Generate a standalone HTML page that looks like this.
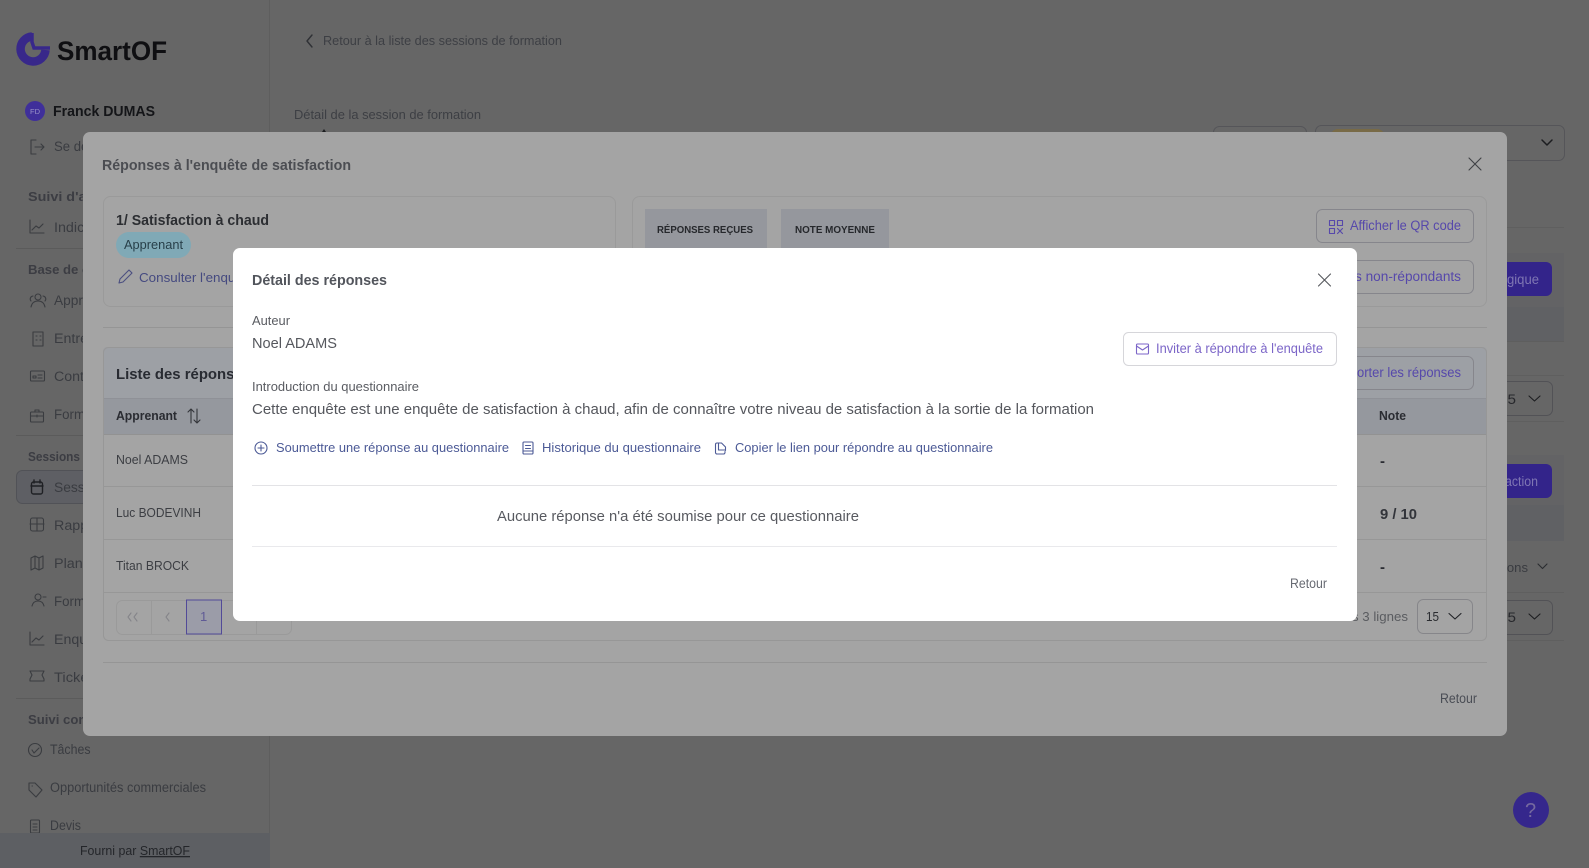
<!DOCTYPE html>
<html lang="fr"><head><meta charset="utf-8"><title>SmartOF</title>
<style>
html,body{margin:0;padding:0;width:1589px;height:868px;overflow:hidden;background:#666}
svg{display:block;font-family:"Liberation Sans",sans-serif}
.i{fill:none;stroke-width:1.1;stroke-linecap:round;stroke-linejoin:round}
.b{font-weight:700}
</style></head><body>
<svg width="1589" height="868" viewBox="0 0 1589 868" xmlns="http://www.w3.org/2000/svg">
<rect width="1589" height="868" fill="#666"/>
<!-- sidebar -->
<rect x="269" y="0" width="1" height="833" fill="#5e5e5e"/>
<path d="M32 36.500A12.500 12.500 0 1 0 45.500 50" fill="none" stroke="#38288a" stroke-width="8.500"/>
<path d="M32 33v9l2 6h16" fill="none" stroke="#38288a" stroke-width="3.500"/>
<text x="57" y="60" font-size="27" class="b" fill="#0f0f12" textLength="110" lengthAdjust="spacingAndGlyphs">SmartOF</text>
<circle cx="35" cy="111" r="10" fill="#3f2f9a"/>
<text x="30" y="114" font-size="7.500" fill="#9a93c8" textLength="10" lengthAdjust="spacingAndGlyphs">FD</text>
<text x="53" y="116" font-size="15" class="b" fill="#141518" textLength="102" lengthAdjust="spacingAndGlyphs">Franck DUMAS</text>
<rect x="16.500" y="470.500" width="253" height="33" rx="6" fill="#5e5f64" stroke="#515257"/>
<g font-size="13.500" fill="#3a3c41">
<text x="54" y="151" textLength="92" lengthAdjust="spacingAndGlyphs">Se déconnecter</text>
<text x="54" y="232" textLength="70" lengthAdjust="spacingAndGlyphs">Indicateurs</text>
<text x="54" y="305" textLength="70" lengthAdjust="spacingAndGlyphs">Apprenants</text>
<text x="54" y="343" textLength="72" lengthAdjust="spacingAndGlyphs">Entreprises</text>
<text x="54" y="381" textLength="56" lengthAdjust="spacingAndGlyphs">Contacts</text>
<text x="54" y="419" textLength="68" lengthAdjust="spacingAndGlyphs">Formateurs</text>
<text x="54" y="492" textLength="56" lengthAdjust="spacingAndGlyphs">Sessions</text>
<text x="54" y="530" textLength="58" lengthAdjust="spacingAndGlyphs">Rapports</text>
<text x="54" y="568" textLength="56" lengthAdjust="spacingAndGlyphs">Planning</text>
<text x="54" y="606" textLength="68" lengthAdjust="spacingAndGlyphs">Formateurs</text>
<text x="54" y="644" textLength="60" lengthAdjust="spacingAndGlyphs">Enquêtes</text>
<text x="54" y="682" textLength="46" lengthAdjust="spacingAndGlyphs">Tickets</text>
<text x="50" y="754" textLength="40.500" lengthAdjust="spacingAndGlyphs">Tâches</text>
<text x="50" y="792" textLength="156" lengthAdjust="spacingAndGlyphs">Opportunités commerciales</text>
<text x="50" y="830" textLength="31" lengthAdjust="spacingAndGlyphs">Devis</text>
</g>
<g font-size="13" class="b" fill="#3c3d43">
<text x="28" y="201" textLength="100" lengthAdjust="spacingAndGlyphs">Suivi d'activité</text>
<text x="28" y="274" textLength="108" lengthAdjust="spacingAndGlyphs">Base de contacts</text>
<text x="28" y="461" textLength="52" lengthAdjust="spacingAndGlyphs">Sessions</text>
<text x="28" y="724" textLength="108" lengthAdjust="spacingAndGlyphs">Suivi commercial</text>
</g>
<g fill="#5b5b5b"><rect x="16" y="248" width="253" height="1"/><rect x="16" y="435" width="253" height="1"/><rect x="16" y="698" width="253" height="1"/></g>
<g class="i" stroke="#3a3c40">
<path d="M36 140h-5v14h5M35 147h9M41 144l3 3-3 3"/>
<path d="M30 220v13h14M32 230l4-4 3 2 4-4"/>
<circle cx="38" cy="297" r="3"/><path d="M31 307c1-5 4-6 7-6s6 1 7 6M33 296a3 3 0 0 0-2 5M43 296a3 3 0 0 1 2 5"/>
<path d="M33 332h10v14H33zM36 336h1M40 336h1M36 340h1M40 340h1"/>
<rect x="30.500" y="371" width="14" height="10" rx="1"/><path d="M33 376h3v2h-3zM38 375h4M38 378h4"/>
<rect x="30.500" y="412" width="13" height="10" rx="1"/><path d="M35 412v-2h4v2M31 416h12M37 415v2"/>
<rect x="31.500" y="482" width="11" height="12" rx="2" stroke="#1f2024" stroke-width="1.400"/><path d="M31 486h12M34 480v3M40 480v3" stroke="#1f2024" stroke-width="1.400"/>
<rect x="30.500" y="518" width="13" height="13" rx="2"/><path d="M30 524h14M37 518v13"/>
<path d="M31 558l4-2 4 2 4-2v12l-4 2-4-2-4 2zM35 556v12M39 558v12"/>
<circle cx="38" cy="597" r="3"/><path d="M32 606c1-4 3-5 6-5s5 1 6 5M43 597h3"/>
<path d="M30 632v13h14M32 642l4-4 3 2 4-4"/>
<path d="M30 671h14l-2 4 2 4v2H30v-2l2-4-2-4z"/>
<circle cx="35" cy="750" r="6.500"/><path d="M32 750l2 3 5-5"/>
<path d="M29 783h6l7 7-6 7-7-7zM32 786h.5"/>
<rect x="30.500" y="820" width="9" height="13" rx="1"/><path d="M33 824h4M33 827h4M33 830h4"/>
<path d="M312 35l-5 6 5 6" stroke="#2f3135" stroke-width="1.400"/>
<path d="M1542 140l5 5 5-5" stroke="#1c1d20" stroke-width="1.500"/>
</g>
<rect x="0" y="833" width="270" height="35" fill="#5d5f63"/>
<text x="80" y="855" font-size="13" fill="#24262a" textLength="110" lengthAdjust="spacingAndGlyphs">Fourni par <tspan text-decoration="underline">SmartOF</tspan></text>
<!-- main -->
<text x="323" y="45" font-size="13" fill="#3d3f44" textLength="239" lengthAdjust="spacingAndGlyphs">Retour à la liste des sessions de formation</text>
<text x="294" y="119" font-size="13" fill="#3d3f44" textLength="187" lengthAdjust="spacingAndGlyphs">Détail de la session de formation</text>
<path d="M322 132l2-3 2 3" fill="#1c1d20"/>
<rect x="1213.500" y="126.500" width="93" height="40" rx="6" fill="none" stroke="#555559"/>
<rect x="1315.500" y="125.500" width="249" height="35" rx="6" fill="none" stroke="#555559"/>
<rect x="1330" y="129" width="55" height="20" rx="8" fill="#786a46"/>
<rect x="1240" y="227" width="324" height="1" fill="#5f5f5f"/>
<!-- right side remains -->
<rect x="1500" y="253" width="64" height="54" fill="#636365"/>
<rect x="1500" y="307" width="64" height="34" fill="#606164"/>
<rect x="1500" y="341" width="64" height="1" fill="#5e5e5e"/>
<rect x="1500" y="375" width="64" height="1" fill="#5f5f5f"/>
<rect x="1500" y="421" width="64" height="1" fill="#5f5f5f"/>
<rect x="1440" y="262" width="112" height="34" rx="6" fill="#33248a"/>
<text x="1507" y="284" font-size="13.500" fill="#7f76b3" textLength="32" lengthAdjust="spacingAndGlyphs">gique</text>
<rect x="1400.500" y="381.500" width="152" height="34" rx="6" fill="none" stroke="#525256"/>
<text x="1499" y="404" font-size="13.500" fill="#27282c" textLength="17" lengthAdjust="spacingAndGlyphs">15</text>
<path d="M1529 396l5.500 5 5.500-5" class="i" stroke="#1c1d20" stroke-width="1.500"/>
<rect x="1500" y="455" width="64" height="50" fill="#636365"/>
<rect x="1500" y="505" width="64" height="36" fill="#606164"/>
<rect x="1400" y="464" width="152" height="34" rx="6" fill="#33248a"/>
<text x="1505" y="486" font-size="13.500" fill="#7f76b3" textLength="33" lengthAdjust="spacingAndGlyphs">action</text>
<text x="1504" y="572" font-size="13" fill="#3a3c41" textLength="24" lengthAdjust="spacingAndGlyphs">ions</text>
<path d="M1538 564l4.500 4.500 4.500-4.500" class="i" stroke="#2a2c30" stroke-width="1.400"/>
<rect x="1500" y="592" width="64" height="1" fill="#5f5f5f"/>
<rect x="1400.500" y="600.500" width="152" height="34" rx="6" fill="none" stroke="#525256"/>
<text x="1499" y="622" font-size="13.500" fill="#27282c" textLength="17" lengthAdjust="spacingAndGlyphs">15</text>
<path d="M1529 614l5.500 5 5.500-5" class="i" stroke="#1c1d20" stroke-width="1.500"/>
<rect x="1500" y="640" width="64" height="1" fill="#5f5f5f"/>
<circle cx="1531" cy="810" r="18" fill="#35278c"/>
<text x="1525" y="817" font-size="20" fill="#75699f">?</text>
<!-- outer modal -->
<rect x="83" y="132" width="1424" height="604" rx="7" fill="#a4a4a4"/>
<text x="102" y="170" font-size="15" class="b" fill="#4b4d52" textLength="249" lengthAdjust="spacingAndGlyphs">Réponses à l'enquête de satisfaction</text>
<path d="M1469 158l12 12M1481 158l-12 12" class="i" stroke="#3f4145" stroke-width="1.200"/>
<rect x="103.500" y="196.500" width="512" height="110" rx="7" fill="none" stroke="#9a9a9a"/>
<rect x="632.500" y="196.500" width="854" height="110" rx="7" fill="none" stroke="#9a9a9a"/>
<text x="116" y="225" font-size="15" class="b" fill="#2c2e32" textLength="153" lengthAdjust="spacingAndGlyphs">1/ Satisfaction à chaud</text>
<rect x="116" y="232" width="75" height="26" rx="13" fill="#80a9b6"/>
<text x="124" y="249" font-size="13" fill="#28404a" textLength="59" lengthAdjust="spacingAndGlyphs">Apprenant</text>
<path d="M119 283l1-4 9-9 3 3-9 9z" class="i" stroke="#4b4f80"/>
<text x="139" y="282" font-size="13" fill="#454a80" textLength="115" lengthAdjust="spacingAndGlyphs">Consulter l'enquête</text>
<rect x="645" y="209" width="122" height="90" fill="#95979d"/>
<rect x="781" y="209" width="108" height="90" fill="#95979d"/>
<text x="657" y="233" font-size="10.500" class="b" fill="#26282c" textLength="96" lengthAdjust="spacingAndGlyphs">RÉPONSES REÇUES</text>
<text x="795" y="233" font-size="10.500" class="b" fill="#26282c" textLength="80" lengthAdjust="spacingAndGlyphs">NOTE MOYENNE</text>
<rect x="1316.500" y="209.500" width="157" height="33" rx="6" fill="none" stroke="#86868c"/>
<g class="i" stroke="#5648ab"><rect x="1329.500" y="220.500" width="5" height="5"/><rect x="1337.500" y="220.500" width="5" height="5"/><rect x="1329.500" y="228.500" width="5" height="5"/><path d="M1337.500 228.500l5 5M1342.500 228.500l-5 5"/></g>
<text x="1350" y="230" font-size="13.500" fill="#5648ab" textLength="111" lengthAdjust="spacingAndGlyphs">Afficher le QR code</text>
<rect x="1316.500" y="260.500" width="157" height="33" rx="6" fill="none" stroke="#86868c"/>
<text x="1355" y="281" font-size="13.500" fill="#5648ab" textLength="106" lengthAdjust="spacingAndGlyphs">s non-répondants</text>
<rect x="103" y="327" width="1384" height="1" fill="#959595"/>
<rect x="103" y="347" width="1384" height="52" rx="4" fill="#9da0a5"/>
<rect x="103" y="398" width="1384" height="36" fill="#95989e"/>
<rect x="103" y="398" width="1384" height="1" fill="#8f9197"/>
<rect x="103" y="434" width="1384" height="1" fill="#929292"/>
<rect x="103.500" y="347.500" width="1383" height="293" rx="5" fill="none" stroke="#979797"/>
<rect x="103" y="486" width="1384" height="1" fill="#979797"/>
<rect x="103" y="539" width="1384" height="1" fill="#979797"/>
<rect x="103" y="592" width="1384" height="1" fill="#979797"/>
<text x="116" y="379" font-size="15" class="b" fill="#282b32" textLength="135" lengthAdjust="spacingAndGlyphs">Liste des réponses</text>
<rect x="1316.500" y="356.500" width="157" height="33" rx="6" fill="none" stroke="#86868c"/>
<text x="1357" y="377" font-size="13.500" fill="#5648ab" textLength="104" lengthAdjust="spacingAndGlyphs">orter les réponses</text>
<text x="116" y="420" font-size="13" class="b" fill="#2a2c32" textLength="61" lengthAdjust="spacingAndGlyphs">Apprenant</text>
<path d="M191 423v-14M188 412l3-3 3 3M197 409v14M194 420l3 3 3-3" class="i" stroke="#33353a"/>
<text x="1379" y="420" font-size="13" class="b" fill="#2a2c32" textLength="27" lengthAdjust="spacingAndGlyphs">Note</text>
<g font-size="13" fill="#3c3e43">
<text x="116" y="464" textLength="72" lengthAdjust="spacingAndGlyphs">Noel ADAMS</text>
<text x="116" y="517" textLength="85" lengthAdjust="spacingAndGlyphs">Luc BODEVINH</text>
<text x="116" y="570" textLength="73" lengthAdjust="spacingAndGlyphs">Titan BROCK</text>
</g>
<text x="1380" y="466" font-size="15" class="b" fill="#2a2c32">-</text>
<text x="1380" y="519" font-size="15" class="b" fill="#32343a" textLength="37" lengthAdjust="spacingAndGlyphs">9 / 10</text>
<text x="1380" y="572" font-size="15" class="b" fill="#2a2c32">-</text>
<rect x="116.500" y="600.500" width="175" height="34" rx="6" fill="none" stroke="#9a9a9a"/>
<path d="M151.500 600v34M221.500 600v34M256.500 600v34" stroke="#9a9a9a"/>
<rect x="186.500" y="600" width="35" height="34" fill="#9b9ca8" stroke="#524a98"/>
<path d="M131 613l-3 4 3 4M137 613l-3 4 3 4M169 613l-3 4 3 4" class="i" stroke="#85858a"/>
<text x="200" y="621" font-size="13" fill="#5f5a96">1</text>
<text x="1352" y="621" font-size="13" fill="#5a5c60" textLength="56" lengthAdjust="spacingAndGlyphs">s 3 lignes</text>
<rect x="1417.500" y="599.500" width="55" height="34" rx="6" fill="none" stroke="#86868a"/>
<text x="1426" y="621" font-size="13" fill="#2a2c30" textLength="13" lengthAdjust="spacingAndGlyphs">15</text>
<path d="M1449 613.500l6 5.500 6-5.500" class="i" stroke="#202226" stroke-width="1.500"/>
<rect x="103" y="662" width="1384" height="1" fill="#959595"/>
<text x="1440" y="703" font-size="13.500" fill="#4a4d55" textLength="37" lengthAdjust="spacingAndGlyphs">Retour</text>
<!-- inner modal -->
<rect x="233" y="248" width="1124" height="373" rx="7" fill="#fff"/>
<text x="252" y="285" font-size="15" class="b" fill="#52555c" textLength="135" lengthAdjust="spacingAndGlyphs">Détail des réponses</text>
<path d="M1318.500 274l12 12M1330.500 274l-12 12" class="i" stroke="#55575c" stroke-width="1.200"/>
<text x="252" y="325" font-size="13" fill="#5a5c62" textLength="38" lengthAdjust="spacingAndGlyphs">Auteur</text>
<text x="252" y="348" font-size="15" fill="#55575d" textLength="85" lengthAdjust="spacingAndGlyphs">Noel ADAMS</text>
<rect x="1123.500" y="332.500" width="213" height="33" rx="5" fill="#fff" stroke="#d6d6da"/>
<rect x="1136.500" y="344" width="12" height="10" rx="1" class="i" stroke="#7c66c8"/>
<path d="M1136.500 346l6 4 6-4" class="i" stroke="#7c66c8"/>
<text x="1156" y="353" font-size="13.500" fill="#7c66c8" textLength="167" lengthAdjust="spacingAndGlyphs">Inviter à répondre à l'enquête</text>
<text x="252" y="391" font-size="13" fill="#5a5c62" textLength="167" lengthAdjust="spacingAndGlyphs">Introduction du questionnaire</text>
<text x="252" y="414" font-size="15" fill="#55575d" textLength="842" lengthAdjust="spacingAndGlyphs">Cette enquête est une enquête de satisfaction à chaud, afin de connaître votre niveau de satisfaction à la sortie de la formation</text>
<g class="i" stroke="#4c5a96">
<circle cx="261" cy="448" r="6"/><path d="M261 445v6M258 448h6"/>
<rect x="523" y="442" width="10" height="12" rx="1"/><path d="M525.500 445.500h5M525.500 448.500h5M523 451h10"/>
<path transform="translate(1.500 0)" d="M717 443h-1.500a1.500 1.500 0 0 0-1.500 1.500v8a1.500 1.500 0 0 0 1.500 1.500h6.500a1.500 1.500 0 0 0 1.500-1.500v-1M717 443h3l4 4v3.500M717 443v7h7"/>
</g>
<g font-size="13" fill="#4c5a96">
<text x="276" y="452" textLength="233" lengthAdjust="spacingAndGlyphs">Soumettre une réponse au questionnaire</text>
<text x="542" y="452" textLength="159" lengthAdjust="spacingAndGlyphs">Historique du questionnaire</text>
<text x="735" y="452" textLength="258" lengthAdjust="spacingAndGlyphs">Copier le lien pour répondre au questionnaire</text>
</g>
<rect x="252" y="485" width="1085" height="1" fill="#e3e3e6"/>
<text x="497" y="521" font-size="15" fill="#585a60" textLength="362" lengthAdjust="spacingAndGlyphs">Aucune réponse n'a été soumise pour ce questionnaire</text>
<rect x="252" y="546" width="1085" height="1" fill="#e9e9ec"/>
<text x="1290" y="588" font-size="13.500" fill="#686b73" textLength="37" lengthAdjust="spacingAndGlyphs">Retour</text>
</svg>
</body></html>
